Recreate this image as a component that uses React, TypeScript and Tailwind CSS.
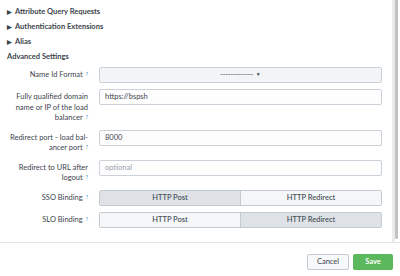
const sections = ["Attribute Query Requests", "Authentication Extensions", "Alias"];

function Hint() {
  return (
    <sup className="relative -top-[1px] ml-[3px] text-[5px] font-bold text-[#5ea4d4]">?</sup>
  );
}

function Row({ label, children }: { label: React.ReactNode; children: React.ReactNode }) {
  return (
    <div className="flex items-start gap-[11px]">
      <div className="w-[88px] shrink-0 pt-[3px] text-right leading-[10.5px] text-[#3c444d]">
        {label}
        <Hint />
      </div>
      <div className="w-[283px]">{children}</div>
    </div>
  );
}

function TextInput({ value, placeholder }: { value?: string; placeholder?: string }) {
  return (
    <div className="flex h-[16px] items-center rounded-[2px] border border-[#cbd1d8] bg-[#fdfdfd] px-[5px]">
      {value ? (
        <span className="text-[#3c444d]">{value}</span>
      ) : (
        <span className="text-[#9aa1a8]">{placeholder}</span>
      )}
    </div>
  );
}

function Toggle({ active }: { active: 0 | 1 }) {
  const options = ["HTTP Post", "HTTP Redirect"];
  return (
    <div className="flex h-[16px] overflow-hidden rounded-[2px] border border-[#c3cad2]">
      {options.map((opt, i) => (
        <div
          key={opt}
          className={`flex flex-1 items-center justify-center font-semibold text-[#4a525b] ${
            i === 1 ? "border-l border-[#c3cad2]" : ""
          } ${i === active ? "bg-[#dee2e6]" : "bg-[#f5f6f7]"}`}
        >
          {opt}
        </div>
      ))}
    </div>
  );
}

export default function App() {
  return (
    <div className="flex h-[276px] w-[400px] flex-col overflow-hidden bg-white text-[7.5px] font-['Lato',sans-serif]">
      <div className="flex h-[242px] shrink-0">
        <div className="flex-1 pt-[4px]">
          {sections.map((s) => (
            <div key={s} className="flex items-center pl-[7px] leading-[15px] font-bold text-[#3c444d]">
              <span className="mr-[3px] text-[6px]">▶</span>
              {s}
            </div>
          ))}
          <div className="pl-[7px] leading-[15px] font-bold text-[#3c444d]">Advanced Settings</div>

          <div className="mt-[3px] flex flex-col gap-[6px]">
            <Row label="Name Id Format">
              <div className="flex h-[16px] items-center justify-center rounded-[2px] border border-[#cbd1d8] bg-[#f3f4f6]">
                <span className="tracking-[-0.3px] text-[#4a525b]">-------------</span>
                <span className="ml-[3px] text-[5px] text-[#3c444d]">▼</span>
              </div>
            </Row>
            <Row
              label={
                <>
                  Fully qualified domain
                  <br />
                  name or IP of the load
                  <br />
                  balancer
                </>
              }
            >
              <TextInput value="https://bspsh" />
            </Row>
            <Row
              label={
                <>
                  Redirect port - load bal-
                  <br />
                  ancer port
                </>
              }
            >
              <TextInput value="8000" />
            </Row>
            <Row
              label={
                <>
                  Redirect to URL after
                  <br />
                  logout
                </>
              }
            >
              <TextInput placeholder="optional" />
            </Row>
            <Row label="SSO Binding">
              <Toggle active={0} />
            </Row>
            <Row label="SLO Binding">
              <Toggle active={1} />
            </Row>
          </div>
        </div>
        <div className="flex w-[8px] shrink-0">
          <div className="w-[3px] bg-[#ebebeb]" />
          <div className="mb-[3px] w-[3px] rounded-b-[2px] bg-[#c1c1c1]" />
          <div className="w-[2px] bg-white" />
        </div>
      </div>
      <div className="flex flex-1 justify-end gap-[4px] border-t border-[#e3e6e9] pr-[7px] pt-[11px]">
        <button className="h-[16px] w-[42px] rounded-[2px] border border-[#c3cad2] bg-[#f7f8f9] text-[7.5px] text-[#3c444d]">
          Cancel
        </button>
        <button className="h-[16px] w-[40px] rounded-[2px] bg-[#5cb85c] text-[7.5px] font-bold text-white">
          Save
        </button>
      </div>
    </div>
  );
}
